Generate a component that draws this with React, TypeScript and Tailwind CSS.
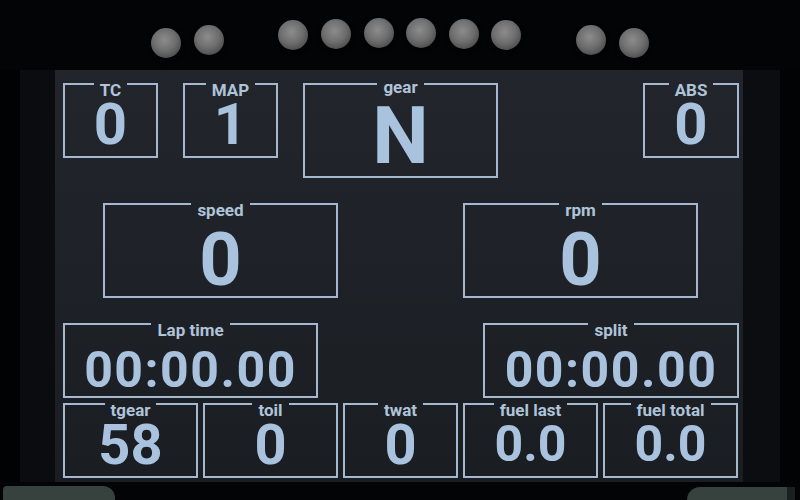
import type { ReactNode } from "react";

const balls = [
  "ml-[151px] mt-[28px]",
  "ml-[13px] mt-[25px]",
  "ml-[54px] mt-[20px]",
  "ml-[13px] mt-[19px]",
  "ml-[13px] mt-[18px]",
  "ml-[12px] mt-[18px]",
  "ml-[13px] mt-[19px]",
  "ml-[12px] mt-[20px]",
  "ml-[55px] mt-[25px]",
  "ml-[13px] mt-[28px]",
];

type GaugeProps = {
  label: string;
  value: ReactNode;
  size: string;
  valueClass: string;
  labelClass?: string;
};

const Gauge = ({ label, value, size, valueClass, labelClass = "" }: GaugeProps) => (
  <div className={`flex flex-col items-center border-x-2 border-b-2 border-[#a4b9d0] shrink-0 ${size}`}>
    <div className="flex items-start self-stretch -mx-[2px] h-[14px]">
      <div className="flex-1 h-[2px] bg-[#a4b9d0]" />
      <span className={`px-[6px] text-[17px] leading-[14px] font-bold text-[#afc3d9] ${labelClass}`}>{label}</span>
      <div className="flex-1 h-[2px] bg-[#a4b9d0]" />
    </div>
    <div className={`leading-[0.75] font-bold text-[#a9c3df] ${valueClass}`}>{value}</div>
  </div>
);

export default function App() {
  return (
    <div className="w-[800px] h-[500px] bg-[#030406] flex flex-col overflow-hidden font-['Roboto',sans-serif]">
      <div className="h-[70px] flex items-start shrink-0">
        {balls.map((b, i) => (
          <div
            key={i}
            className={`w-[30px] h-[30px] rounded-full shrink-0 bg-[radial-gradient(circle_at_45%_40%,#8c8c8c_0%,#6e6e6e_45%,#4a4a4a_80%,#383838_100%)] shadow-[0_2px_4px_rgba(0,0,0,0.6)] ${b}`}
          />
        ))}
      </div>

      <div className="flex h-[412px] shrink-0">
        <div className="w-[20px] bg-[#010203]" />
        <div className="w-[35px] bg-[#0a0c0f]" />
        <div className="w-[688px] h-[412px] bg-linear-to-b from-[#22262c] to-[#1a1d22] flex flex-col pl-[8px] pt-[13px]">
          <div className="flex items-start">
            <Gauge label="TC" value="0" size="w-[95px] h-[75px]" valueClass="text-[58px] mt-[6px]" />
            <div className="w-[25px] shrink-0" />
            <Gauge label="MAP" value="1" size="w-[95px] h-[75px]" valueClass="text-[58px] mt-[6px]" />
            <div className="w-[25px] shrink-0" />
            <Gauge label="gear" value="N" size="w-[195px] h-[95px]" valueClass="text-[80px] mt-[9px]" labelClass="-mt-[3px]" />
            <div className="w-[145px] shrink-0" />
            <Gauge label="ABS" value="0" size="w-[96px] h-[75px]" valueClass="text-[58px] mt-[6px]" />
          </div>

          <div className="flex items-start mt-[25px] pl-[40px]">
            <Gauge label="speed" value="0" size="w-[235px] h-[95px]" valueClass="text-[74px] mt-[15px]" />
            <div className="w-[125px] shrink-0" />
            <Gauge label="rpm" value="0" size="w-[235px] h-[95px]" valueClass="text-[74px] mt-[15px]" />
          </div>

          <div className="flex items-start mt-[25px]">
            <Gauge label="Lap time" value="00:00.00" size="w-[255px] h-[75px]" valueClass="text-[50px] mt-[15px] tracking-[1.5px]" />
            <div className="w-[165px] shrink-0" />
            <Gauge label="split" value="00:00.00" size="w-[256px] h-[75px]" valueClass="text-[50px] mt-[15px] tracking-[1.5px]" />
          </div>

          <div className="flex items-start gap-[5px] mt-[5px]">
            <Gauge label="tgear" value="58" size="w-[135px] h-[75px]" valueClass="text-[56px] mt-[7px]" />
            <Gauge label="toil" value="0" size="w-[135px] h-[75px]" valueClass="text-[56px] mt-[7px]" />
            <Gauge label="twat" value="0" size="w-[115px] h-[75px]" valueClass="text-[56px] mt-[7px]" />
            <Gauge label="fuel last" value="0.0" size="w-[135px] h-[75px]" valueClass="text-[50px] mt-[9px]" />
            <Gauge label="fuel total" value="0.0" size="w-[135px] h-[75px]" valueClass="text-[50px] mt-[9px]" />
          </div>
        </div>
        <div className="w-[37px] bg-[#0b0d10]" />
        <div className="flex-1 bg-[#020304]" />
      </div>

      <div className="flex-1 flex items-end justify-between">
        <div className="w-[112px] h-[14px] ml-[3px] bg-[#37423f] rounded-tr-[12px] rounded-tl-[4px]" />
        <div className="w-[108px] h-[13px] mr-[5px] bg-[#37423f] rounded-tl-[14px] border-r-[8px] border-[#1a2020]" />
      </div>
    </div>
  );
}
